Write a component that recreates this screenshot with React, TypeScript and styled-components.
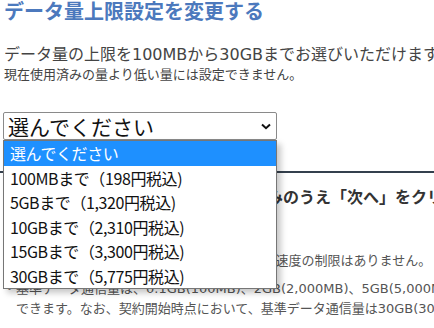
import React from "react";
import styled, { createGlobalStyle } from "styled-components";

const Global = createGlobalStyle`
  html, body {
    margin: 0;
    padding: 0;
    background: #ffffff;
    overflow: hidden;
  }
  body {
    font-family: "DejaVu Sans", "Noto Sans CJK JP", sans-serif;
    color: #333333;
  }
`;

const Page = styled.div`
  width: 434px;
  height: 328px;
  overflow: hidden;
  padding-left: 3px;
  box-sizing: border-box;
`;

const Title = styled.h2`
  margin: 0 0 0 1px;
  font-size: 20px;
  line-height: 24px;
  font-weight: 700;
  color: #4c79bd;
  white-space: nowrap;
`;

const Lead = styled.p`
  margin: 20px 0 0 1px;
  font-size: 16px;
  line-height: 22px;
  color: #444444;
  white-space: nowrap;
`;

const Note = styled.p`
  margin: 0 0 0 1px;
  font-size: 13px;
  line-height: 18px;
  color: #444444;
  white-space: nowrap;
`;

const SelectWrap = styled.div`
  position: relative;
  margin-top: 28px;
  width: 274px;
  z-index: 2;
`;

const SelectBox = styled.div`
  box-sizing: border-box;
  height: 28px;
  border: 1px solid #8a8a8a;
  border-radius: 2px;
  background: #ffffff;
  display: flex;
  align-items: center;
  justify-content: space-between;
  padding: 0 5px 0 4px;
  font-family: "Noto Sans CJK JP", sans-serif;
  font-size: 21px;
  color: #111111;
`;

const Chevron = () => (
  <svg width="10" height="7" viewBox="0 0 10 7">
    <path d="M1 1.5 L5 5.2 L9 1.5" fill="none" stroke="#111" strokeWidth="2" />
  </svg>
);

const List = styled.ul`
  position: absolute;
  top: 100%;
  left: 0;
  width: 274px;
  box-sizing: border-box;
  margin: 0;
  padding: 0;
  list-style: none;
  background: #ffffff;
  border: 1px solid #767676;
  box-shadow: 4px 4px 6px rgba(0, 0, 0, 0.22);
  font-family: "Noto Sans CJK JP", sans-serif;
`;

const Option = styled.li<{ $active?: boolean }>`
  height: 24.5px;
  display: flex;
  align-items: center;
  padding-left: 6px;
  font-size: 16px;
  letter-spacing: -0.4px;
  color: ${(p) => (p.$active ? "#ffffff" : "#111111")};
  background: ${(p) => (p.$active ? "#1e90ff" : "#ffffff")};
  white-space: nowrap;
`;

const Rule = styled.hr`
  margin: 31px 0 0 -3px;
  border: none;
  height: 2px;
  background: #34404d;
  width: 440px;
`;

const Strong = styled.p`
  margin: 14px 0 0 0;
  padding-left: 8px;
  font-size: 16px;
  line-height: 22px;
  font-weight: 700;
  color: #333333;
  white-space: nowrap;
`;

const Bullets = styled.ul`
  margin: 42px 0 0 0;
  padding: 0 0 0 13px;
  list-style: none;
  font-size: 13px;
  line-height: 20px;
  color: #555555;
`;

const Bullet = styled.li<{ $gap?: number }>`
  text-indent: -13px;
  white-space: nowrap;
  margin-top: ${(p) => p.$gap ?? 0}px;
`;

const options = [
  "選んでください",
  "100MBまで（198円税込)",
  "5GBまで（1,320円税込)",
  "10GBまで（2,310円税込)",
  "15GBまで（3,300円税込)",
  "30GBまで（5,775円税込)",
];

export default function App() {
  return (
    <Page>
      <Global />
      <Title>データ量上限設定を変更する</Title>
      <Lead>データ量の上限を100MBから30GBまでお選びいただけます。</Lead>
      <Note>現在使用済みの量より低い量には設定できません。</Note>
      <SelectWrap>
        <SelectBox>
          <span>選んでください</span>
          <Chevron />
        </SelectBox>
        <List>
          {options.map((o, i) => (
            <Option key={o} $active={i === 0}>
              {o}
            </Option>
          ))}
        </List>
      </SelectWrap>
      <Rule />
      <Strong>上限データ量をお選びのうえお申込みのうえ「次へ」をクリックしてください。</Strong>
      <Bullets>
        <Bullet>・基準データ通信量を超過した場合でも、通信速度の制限はありません。</Bullet>
        <Bullet $gap={8}>
          ・基準データ通信量は、0.1GB(100MB)、2GB(2,000MB)、5GB(5,000MB)、10GB(10,000MB)から選択
          <br />
          できます。なお、契約開始時点において、基準データ通信量は30GB(30,000MB)に設定されています。
        </Bullet>
      </Bullets>
    </Page>
  );
}
